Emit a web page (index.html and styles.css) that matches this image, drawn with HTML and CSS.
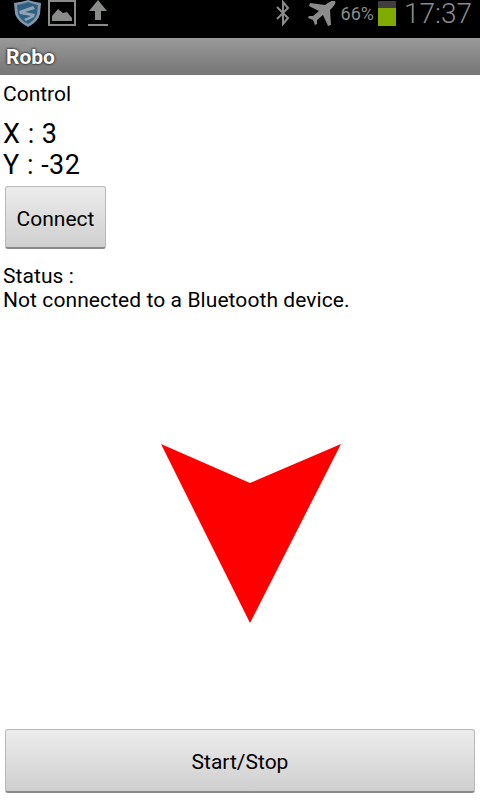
FILE: index.html
```html
<!DOCTYPE html>
<html lang="en">
<head>
    <meta charset="UTF-8">
    <title>Robo</title>
    <link rel="stylesheet" href="styles.css">
</head>
<body>
    <div class="status-bar">
        <div class="status-left">
            <svg class="icon-shield" width="28" height="28" viewBox="0 0 28 28">
                <path d="M0 3 Q8 2 14 0 Q20 2 27 3 L26 14 Q24 22 14 27 Q4 22 1 14 Z" fill="#7f98ad"/>
                <path d="M3 5 Q9 4 14 2 Q19 4 24 5 L23 14 Q21 20 14 24 Q6 20 4 14 Z" fill="#2f607f"/>
                <path d="M5 11 L19 6 L21 9 L11 12 L21 14 L20 17 L12 21 L10 19 L17 16 L6 14 Z" fill="#8fa3b3"/>
            </svg>
            <svg class="icon-picture" width="28" height="26" viewBox="0 0 28 26">
                <rect x="1" y="1" width="26" height="24" fill="none" stroke="#8a8c8a" stroke-width="2"/>
                <path d="M4 21 L4 16 L10 9 L15 13 L19 12 L24 18 L24 21 Z" fill="#8a8c8a"/>
            </svg>
            <svg class="icon-upload" width="20" height="26" viewBox="0 0 20 26">
                <path d="M10 0 L19 11 L13 11 L13 20 L7 20 L7 11 L1 11 Z" fill="#8a8c8a"/>
                <rect x="0" y="24" width="20" height="2" fill="#8a8c8a"/>
            </svg>
        </div>
        <div class="status-right">
            <svg class="icon-bt" width="14" height="26" viewBox="0 0 14 26">
                <path d="M1 7 L12 18 L7 24 L7 2 L12 8 L1 19" fill="none" stroke="#8a8c8a" stroke-width="2"/>
            </svg>
            <svg class="icon-plane" width="28" height="26" viewBox="0 0 28 26">
                <path d="M27 0 Q29 2 22 9 L23 24 L20 25 L15 14 L9 19 L9 23 L7 24 L5 19 L0 17 L1 15 L5 15 L11 10 L1 5 L2 2 L17 4 Q25 -2 27 0 Z" fill="#8a8c8a"/>
            </svg>
            <span class="battery-text">66%</span>
            <div class="battery">
                <div class="battery-fill"></div>
            </div>
            <span class="clock">17:37</span>
        </div>
    </div>
    <div class="title-bar">Robo</div>
    <div class="content">
        <div class="label">Control</div>
        <div class="coords">
            <div>X : 3</div>
            <div>Y : -32</div>
        </div>
        <button class="btn btn-connect">Connect</button>
        <div class="status-text">
            <div>Status :</div>
            <div>Not connected to a Bluetooth device.</div>
        </div>
        <div class="arrow-area">
            <svg width="180" height="180" viewBox="0 0 180 180">
                <polygon points="0,0 89,39 180,0 89,179" fill="#ff0000"/>
            </svg>
        </div>
        <button class="btn btn-start">Start/Stop</button>
    </div>
</body>
</html>
```

FILE: styles.css
```css
html, body {
    height: 100%;
}

body {
    margin: 0;
    padding: 0;
    background-color: #fff;
    color: #000;
    font-family: Roboto, sans-serif;
    display: flex;
    flex-direction: column;
    overflow: hidden;
}

.status-bar {
    height: 38px;
    flex: none;
    background-color: #000;
    display: flex;
    justify-content: space-between;
    align-items: flex-start;
    overflow: hidden;
}

.status-left {
    display: flex;
    align-items: flex-start;
    padding-left: 14px;
}

.icon-picture {
    margin-left: 6px;
}

.icon-upload {
    margin-left: 12px;
}

.status-right {
    display: flex;
    align-items: flex-start;
    padding-right: 8px;
}

.icon-plane {
    margin-left: 18px;
    margin-top: 1px;
}

.battery-text {
    margin-left: 5px;
    margin-top: 3px;
    font-size: 18px;
    line-height: 22px;
    color: #8a8c8a;
}

.battery {
    width: 18px;
    height: 25px;
    margin-top: 1px;
    margin-left: 4px;
    background-color: #3f3d40;
    display: flex;
    align-items: flex-end;
}

.battery-fill {
    width: 100%;
    height: 18px;
    background-color: #7fab00;
}

.clock {
    margin-left: 8px;
    margin-top: 1px;
    font-size: 28px;
    font-weight: 300;
    line-height: 26px;
    color: #8a8c8a;
}

.title-bar {
    height: 37px;
    flex: none;
    box-sizing: border-box;
    padding-left: 6px;
    background: linear-gradient(#9a9a9a, #757575);
    color: #fff;
    font-size: 21px;
    font-weight: 700;
    line-height: 39px;
    text-shadow: 0 0 3px #222, 0 0 2px #222;
}

.content {
    flex: 1;
    min-height: 0;
    display: flex;
    flex-direction: column;
    padding: 7px 5px 7px;
}

.label {
    margin-left: -2px;
    font-size: 21px;
    line-height: 25px;
}

.coords {
    margin-top: 12px;
    margin-left: -2px;
    font-size: 27px;
    letter-spacing: 0.5px;
    line-height: 31px;
}

.btn {
    display: block;
    box-sizing: border-box;
    padding: 2px 0 0;
    border: 1px solid #b9b9b9;
    border-bottom: 2px solid #8a8a8a;
    border-radius: 3px;
    background: linear-gradient(#ececec, #cfcfcf);
    color: #000;
    font-family: Roboto, sans-serif;
    font-size: 21px;
}

.btn-connect {
    width: 101px;
    height: 63px;
    margin-top: 5px;
    padding-top: 4px;
}

.status-text {
    margin-top: 15px;
    margin-left: -2px;
    font-size: 21px;
    letter-spacing: 0.08px;
    line-height: 24px;
}

.arrow-area {
    flex: 1;
    min-height: 0;
    display: flex;
    justify-content: center;
    align-items: flex-start;
    padding-top: 132px;
    padding-left: 21px;
}

.btn-start {
    width: 470px;
    height: 64px;
    flex: none;
}
```
